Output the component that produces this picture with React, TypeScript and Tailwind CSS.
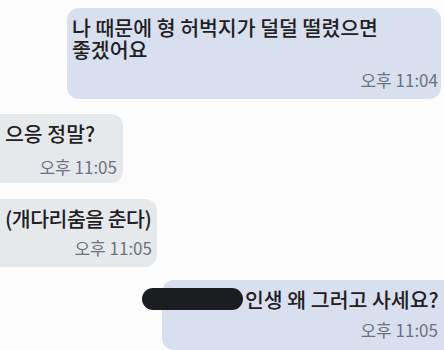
import React from 'react'

const font = "font-['Noto_Sans_CJK_KR','Noto_Sans',sans-serif]"

const Time: React.FC<{ t: string; className?: string }> = ({ t, className }) => (
    <div className={`text-right text-[17px] leading-[20px] text-[#6c727d] ${className ?? ''}`}>
        {t}
    </div>
)

const App: React.FC = () => {
    return (
        <div className={`w-[444px] h-[350px] overflow-hidden bg-[#fcfcfc] text-[#1f2024] ${font}`}>
            <div className="flex flex-col">
                {/* me */}
                <div className="self-end mr-[3px] mt-[8px] w-[374px] rounded-[12px] bg-[#d8dfef] pl-[5px] pr-[3px] pt-[8px] pb-[9px]">
                    <div className="text-[20.5px] leading-[22px] font-medium break-keep">
                        나 때문에 형 허벅지가 덜덜 떨렸으면 좋겠어요
                    </div>
                    <Time t="오후 11:04" className="mt-[10px]" />
                </div>

                {/* them */}
                <div className="self-start mt-[15px] w-[123px] rounded-r-[12px] bg-[#e6e9ec] pl-[5px] pr-[6px] pt-[8px] pb-[6px]">
                    <div className="text-[20.5px] leading-[22px] font-medium">으응 정말?</div>
                    <Time t="오후 11:05" className="mt-[13px]" />
                </div>

                <div className="self-start mt-[16px] w-[157px] rounded-r-[12px] bg-[#e6e9ec] pl-[5px] pr-[5px] pt-[8px] pb-[9px]">
                    <div className="text-[20.5px] leading-[22px] font-medium whitespace-nowrap tracking-[-0.5px]">
                        (개다리춤을 춘다)
                    </div>
                    <Time t="오후 11:05" className="mt-[9px]" />
                </div>

                {/* me */}
                <div className="self-end mt-[13px] w-[282px] rounded-l-[12px] bg-[#d8dfef] pl-[4px] pr-[6px] pt-[8px] pb-[10px]">
                    <div className="flex items-center gap-[2px] -ml-[24px]">
                        <span className="h-[22px] w-[101px] shrink-0 rounded-full bg-[#1c1d20]" />
                        <span className="text-[20.5px] leading-[22px] font-medium whitespace-nowrap">
                            인생 왜 그러고 사세요?
                        </span>
                    </div>
                    <Time t="오후 11:05" className="mt-[10px]" />
                </div>
            </div>
        </div>
    )
}

export default App
